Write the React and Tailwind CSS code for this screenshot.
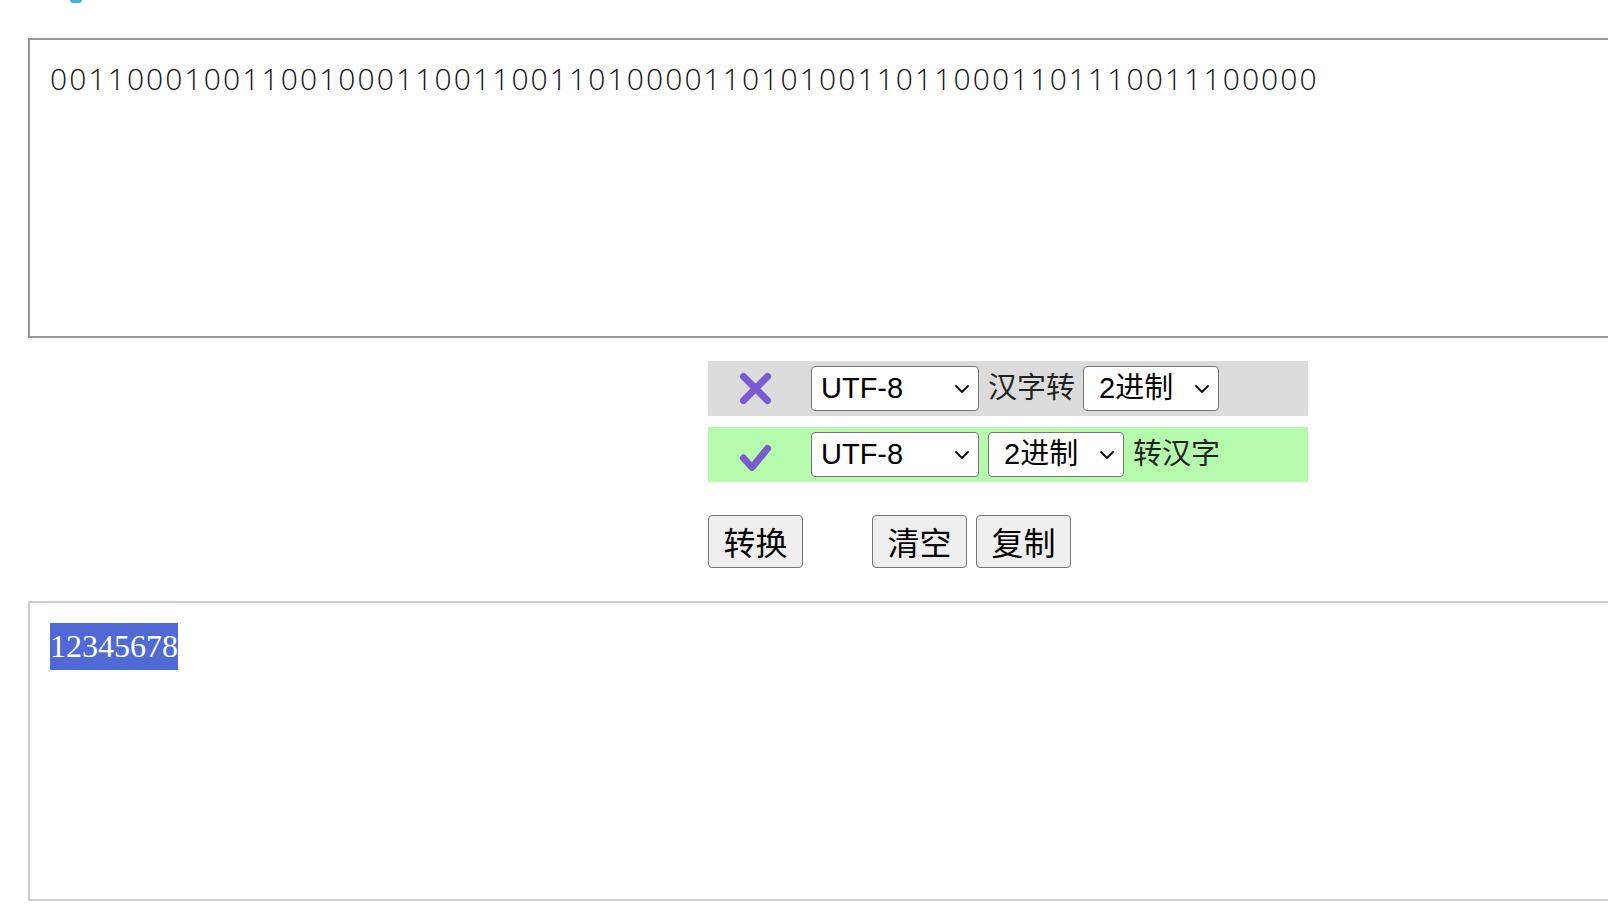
import React from 'react';

const binary = '001100010011001000110011001101000011010100110110001101110011100000';

const Chevron = () => (
  <svg
    width="16"
    height="10"
    viewBox="0 0 16 10"
    className="pointer-events-none absolute right-[9px] top-1/2 -translate-y-1/2"
  >
    <path d="M2 2l6 6 6-6" fill="none" stroke="#111" strokeWidth="1.9" strokeLinecap="round" strokeLinejoin="round" />
  </svg>
);

const Select = ({ options, className }) => (
  <div className="relative">
    <select
      defaultValue={options[0]}
      className={`block h-[45px] appearance-none rounded-[4px] border border-[#767676] bg-white text-[29px] text-black outline-none ${className}`}
    >
      {options.map((o) => (
        <option key={o}>{o}</option>
      ))}
    </select>
    <Chevron />
  </div>
);

const CrossIcon = () => (
  <svg width="33" height="33" viewBox="0 0 33 33">
    <path d="M4.5 4.5l24 24M28.5 4.5l-24 24" stroke="#7b5cd0" strokeWidth="7" strokeLinecap="round" fill="none" />
  </svg>
);

const CheckIcon = () => (
  <svg width="33" height="28" viewBox="0 0 33 28" className="mt-[6px]">
    <path d="M4.5 14l8.5 9.5L28.5 4.5" stroke="#7b5cd0" strokeWidth="7" strokeLinecap="round" strokeLinejoin="round" fill="none" />
  </svg>
);

export default function App() {
  const encodings = ['UTF-8', 'GBK', 'GB2312', 'BIG5'];
  const bases = ['2进制', '8进制', '10进制', '16进制'];

  return (
    <div className="h-[917px] w-full overflow-hidden bg-white font-['Liberation_Sans','Noto_Sans_CJK_SC',sans-serif] text-[#222]">
      <div className="h-[38px]">
        <div className="ml-[70px] h-[3px] w-[12px] rounded-b-full bg-[#3cb6d3]" />
      </div>

      <textarea
        readOnly
        defaultValue={binary}
        className="block ml-[28px] h-[300px] w-[1700px] resize-none overflow-hidden border-2 border-[#999] pl-[20px] pt-[16px] font-['Open_Sans',sans-serif] text-[30px] font-light leading-[45px] tracking-[2.1px] text-[#111] outline-none"
      />

      <div className="ml-[708px] mt-[23px] w-[600px]">
        <div className="flex h-[55px] items-center gap-[9px] bg-[#dcdcdc]">
          <div className="flex w-[94px] justify-center">
            <CrossIcon />
          </div>
          <Select options={encodings} className="w-[168px] pl-[9px]" />
          <span className="-mr-[1px] text-[29px] leading-none">汉字转</span>
          <Select options={bases} className="w-[136px] pl-[15px]" />
        </div>

        <div className="mt-[11px] flex h-[55px] items-center gap-[9px] bg-[#b4fcab]">
          <div className="flex w-[94px] justify-center">
            <CheckIcon />
          </div>
          <Select options={encodings} className="w-[168px] pl-[9px]" />
          <Select options={bases} className="w-[136px] pl-[15px]" />
          <span className="text-[29px] leading-none">转汉字</span>
        </div>
      </div>

      <div className="ml-[708px] mt-[33px] flex">
        <button className="h-[53px] w-[95px] rounded-[4px] border border-[#767676] bg-[#efefef] pt-[5px] text-[32px] leading-none text-black">
          转换
        </button>
        <button className="ml-[69px] h-[53px] w-[95px] rounded-[4px] border border-[#767676] bg-[#efefef] pt-[5px] text-[32px] leading-none text-black">
          清空
        </button>
        <button className="ml-[9px] h-[53px] w-[95px] rounded-[4px] border border-[#767676] bg-[#efefef] pt-[5px] text-[32px] leading-none text-black">
          复制
        </button>
      </div>

      <div className="ml-[28px] mt-[33px] h-[300px] w-[1700px] border-2 border-[#ccc] pl-[20px] pt-[20px]">
        <span className="inline-block bg-[#5169d4] font-['Liberation_Serif',serif] text-[32px] leading-[47px] text-white">
          12345678
        </span>
      </div>
    </div>
  );
}
